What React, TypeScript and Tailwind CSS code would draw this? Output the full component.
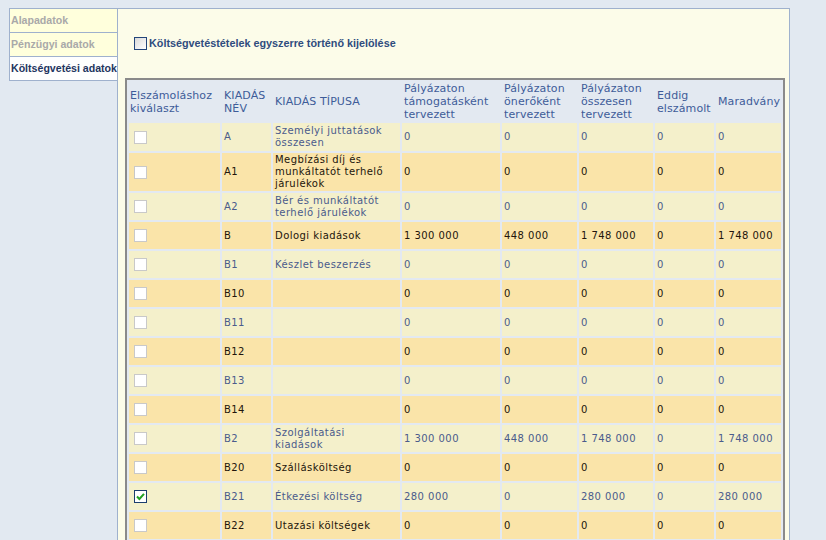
import React from "react";

type Row = {
  id: string;
  name: string;
  v: string[];
  dark: boolean;
  h: string;
  checked?: boolean;
};

const Z = ["0", "0", "0", "0", "0"];

const rows: Row[] = [
  { id: "A", name: "Személyi juttatások összesen", v: Z, dark: false, h: "h-[28px]" },
  { id: "A1", name: "Megbízási díj és munkáltatót terhelő járulékok", v: Z, dark: true, h: "h-[38px]" },
  { id: "A2", name: "Bér és munkáltatót terhelő járulékok", v: Z, dark: false, h: "h-[27px]" },
  { id: "B", name: "Dologi kiadások", v: ["1 300 000", "448 000", "1 748 000", "0", "1 748 000"], dark: true, h: "h-[27px]" },
  { id: "B1", name: "Készlet beszerzés", v: Z, dark: false, h: "h-[27px]" },
  { id: "B10", name: "", v: Z, dark: true, h: "h-[27px]" },
  { id: "B11", name: "", v: Z, dark: false, h: "h-[27px]" },
  { id: "B12", name: "", v: Z, dark: true, h: "h-[27px]" },
  { id: "B13", name: "", v: Z, dark: false, h: "h-[27px]" },
  { id: "B14", name: "", v: Z, dark: true, h: "h-[27px]" },
  { id: "B2", name: "Szolgáltatási kiadások", v: ["1 300 000", "448 000", "1 748 000", "0", "1 748 000"], dark: false, h: "h-[27px]" },
  { id: "B20", name: "Szállásköltség", v: Z, dark: true, h: "h-[27px]" },
  { id: "B21", name: "Étkezési költség", v: ["280 000", "0", "280 000", "0", "280 000"], dark: false, h: "h-[27px]", checked: true },
  { id: "B22", name: "Utazási költségek", v: Z, dark: true, h: "h-[27px]" },
];

function Box({ checked }: { checked?: boolean }) {
  if (checked) {
    return (
      <span className="ml-[3px] flex h-[13px] w-[13px] items-center justify-center border border-[#1c3d6e] bg-white">
        <svg width="9" height="9" viewBox="0 0 9 9">
          <path d="M1 4.5 L3.4 7 L8 1.8" fill="none" stroke="#21a121" strokeWidth="2" />
        </svg>
      </span>
    );
  }
  return <span className="ml-[3px] block h-[13px] w-[13px] border border-[#c9c9c9] bg-white" />;
}

const tabFont = { fontFamily: "'Liberation Sans', Arial, sans-serif" };
const tableFont = { fontFamily: "'DejaVu Sans', Verdana, sans-serif" };

export default function App() {
  return (
    <div className="flex min-h-[540px] items-start bg-[#e2e9f1] pl-[9px] pr-[36px] pt-[8px]">
      <div className="w-[108px] shrink-0 border-l border-t border-[#9fb1cd]" style={tabFont}>
        <div className="h-[24px] border-b border-[#9fb1cd] bg-[#ffffdc] pl-[1px] text-[10.6px] font-bold leading-[23px] text-[#a9a9a9]">
          Alapadatok
        </div>
        <div className="h-[24px] border-b border-[#9fb1cd] bg-[#ffffdc] pl-[1px] text-[10.6px] font-bold leading-[23px] text-[#a9a9a9]">
          Pénzügyi adatok
        </div>
        <div className="h-[24px] whitespace-nowrap border-b border-[#9fb1cd] bg-[#fefefe] pl-[1px] text-[10.6px] font-bold leading-[23px] text-[#1e3560]">
          Költségvetési adatok
        </div>
      </div>
      <div className="flex-1 border border-[#9fb1cd] bg-[#fcfce9] pb-[12px]">
        <div className="flex items-center gap-[2px] pl-[16px] pt-[28px]" style={tabFont}>
          <span className="block h-[13px] w-[13px] border border-[#23457a] bg-gradient-to-br from-[#d9d9d9] to-white" />
          <span className="text-[10.8px] font-bold leading-[13px] text-[#2f4c7e]">
            Költségvetéstételek egyszerre történő kijelölése
          </span>
        </div>
        <div className="pl-[7px] pt-[28px]" style={tableFont}>
          <table className="w-[660px] table-fixed border-separate border-spacing-[2px] border-2 border-[#8a8a8a] bg-[#e3e9f1]">
            <colgroup>
              <col className="w-[91px]" />
              <col className="w-[49px]" />
              <col className="w-[127px]" />
              <col className="w-[98px]" />
              <col className="w-[75px]" />
              <col className="w-[74px]" />
              <col className="w-[59px]" />
              <col className="w-[65px]" />
            </colgroup>
            <thead>
              <tr className="h-[39px] text-[11px] leading-[13px] tracking-[0.1px] text-[#3e5c99]">
                <th className="pl-[1px] text-left align-middle font-normal">Elszámoláshoz kiválaszt</th>
                <th className="pl-[2px] text-left align-middle font-normal">KIADÁS NÉV</th>
                <th className="pl-[2px] text-left align-middle font-normal">KIADÁS TÍPUSA</th>
                <th className="pl-[2px] text-left align-middle font-normal">Pályázaton támogatásként tervezett</th>
                <th className="pl-[2px] text-left align-middle font-normal">Pályázaton önerőként tervezett</th>
                <th className="pl-[2px] text-left align-middle font-normal">Pályázaton összesen tervezett</th>
                <th className="pl-[2px] text-left align-middle font-normal">Eddig elszámolt</th>
                <th className="whitespace-nowrap pl-[2px] text-left align-middle font-normal">Maradvány</th>
              </tr>
            </thead>
            <tbody>
              {rows.map((r) => {
                const bg = r.dark ? "bg-[#fae4a9]" : "bg-[#f4f0cb]";
                const tc = r.dark ? "text-[#22150c]" : "text-[#4a5b8c]";
                return (
                  <tr key={r.id} className={`${r.h} text-[10px] leading-[12px] tracking-[0.45px] ${tc}`}>
                    <td className={`${bg} px-[2px] align-middle`}>
                      <Box checked={r.checked} />
                    </td>
                    <td className={`${bg} px-[2px] align-middle`}>{r.id}</td>
                    <td className={`${bg} pl-[2px] pr-[8px] align-middle`}>{r.name}</td>
                    {r.v.map((x, i) => (
                      <td key={i} className={`${bg} whitespace-nowrap px-[2px] align-middle`}>
                        {x}
                      </td>
                    ))}
                  </tr>
                );
              })}
            </tbody>
          </table>
        </div>
      </div>
    </div>
  );
}
